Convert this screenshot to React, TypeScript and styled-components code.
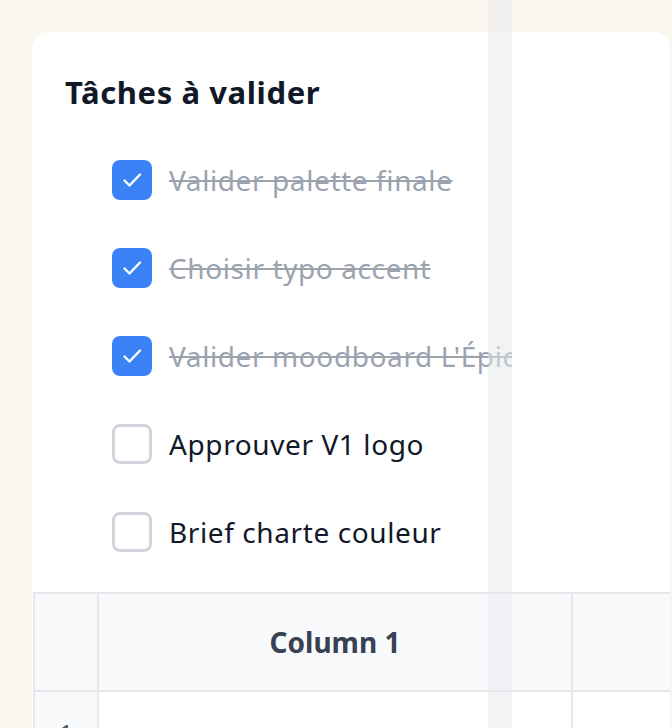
import React from "react";
import styled, { createGlobalStyle } from "styled-components";

const GlobalStyle = createGlobalStyle`
  html, body {
    margin: 0;
    padding: 0;
    background: #faf7f1;
    font-family: "Noto Sans", "Open Sans", sans-serif;
  }
`;

type Task = { label: string; done: boolean };

const tasks: Task[] = [
  { label: "Valider palette finale", done: true },
  { label: "Choisir typo accent", done: true },
  { label: "Valider moodboard L'Épicerie", done: true },
  { label: "Approuver V1 logo", done: false },
  { label: "Brief charte couleur", done: false },
];

const CheckIcon = () => (
  <svg width="40" height="40" viewBox="0 0 40 40" fill="none">
    <path
      d="M12.5 20.5l5 5L28 14.5"
      stroke="#fff"
      strokeWidth="2.4"
      strokeLinecap="round"
      strokeLinejoin="round"
    />
  </svg>
);

export default function App() {
  return (
    <>
      <GlobalStyle />
      <Styled.Page>
        <Styled.Card>
          <Styled.Title>Tâches à valider</Styled.Title>
          <Styled.List>
            {tasks.map((t) => (
              <Styled.Row key={t.label}>
                <Styled.Box $checked={t.done}>{t.done && <CheckIcon />}</Styled.Box>
                <Styled.Label $done={t.done}>{t.label}</Styled.Label>
              </Styled.Row>
            ))}
          </Styled.List>
          <Styled.Table>
            <colgroup>
              <col style={{ width: 64 }} />
              <col style={{ width: 474 }} />
              <col style={{ width: 474 }} />
            </colgroup>
            <thead>
              <tr>
                <Styled.Corner />
                <Styled.Head>Column 1</Styled.Head>
                <Styled.Head />
              </tr>
            </thead>
            <tbody>
              <tr>
                <Styled.RowNum>1</Styled.RowNum>
                <Styled.Cell />
                <Styled.Cell />
              </tr>
            </tbody>
          </Styled.Table>
        </Styled.Card>
        <Styled.Gutter />
      </Styled.Page>
    </>
  );
}

const Styled = {
  Page: styled.div`
    padding: 32px 2px 0 32px;
    height: 728px;
    box-sizing: border-box;
    overflow: hidden;
  `,
  Card: styled.section`
    background: #fff;
    border-radius: 16px 16px 0 0;
    box-shadow: 0 1px 3px rgba(17, 24, 39, 0.04);
    padding: 41px 0 0 0;
    overflow: hidden;
    height: 720px;
  `,
  Title: styled.h2`
    margin: 0 0 0 33px;
    font-size: 31px;
    line-height: 38px;
    font-weight: 700;
    color: #111827;
    letter-spacing: 0.6px;
  `,
  List: styled.ul`
    list-style: none;
    margin: 25px 0 16px 0;
    padding: 0 0 0 80px;
  `,
  Row: styled.li`
    display: flex;
    align-items: center;
    gap: 17px;
    height: 88px;
  `,
  Box: styled.span<{ $checked: boolean }>`
    flex: none;
    width: 40px;
    height: 40px;
    box-sizing: border-box;
    border-radius: 8px;
    display: flex;
    align-items: center;
    justify-content: center;
    background: ${(p) => (p.$checked ? "#3b82f6" : "#fff")};
    border: ${(p) => (p.$checked ? "none" : "3px solid #d1d5db")};
  `,
  Label: styled.span<{ $done: boolean }>`
    max-width: 343px;
    overflow: hidden;
    white-space: nowrap;
    font-size: 28px;
    line-height: 40px;
    letter-spacing: 0.6px;
    color: ${(p) => (p.$done ? "#9ca3af" : "#111827")};
    text-decoration: ${(p) => (p.$done ? "line-through" : "none")};
    text-decoration-thickness: 2px;
  `,
  Table: styled.table`
    width: 1012px;
    border-collapse: collapse;
    table-layout: fixed;
    margin-left: 1px;
    border-top: 2px solid #e5e7eb;
    border-left: 2px solid #e5e7eb;
  `,
  Corner: styled.th`
    height: 96px;
    padding: 0;
    background: #f8fafc;
    border-right: 2px solid #e5e7eb;
    border-bottom: 2px solid #e5e7eb;
  `,
  Head: styled.th`
    height: 96px;
    padding: 0;
    background: #f8fafc;
    border-right: 2px solid #e5e7eb;
    border-bottom: 2px solid #e5e7eb;
    font-size: 28px;
    font-weight: 700;
    color: #374151;
    text-align: center;
  `,
  RowNum: styled.td`
    background: #f9fafb;
    border-right: 2px solid #e5e7eb;
    text-align: center;
    vertical-align: top;
    padding: 24px 0 0 0;
    height: 96px;
    font-size: 24px;
    color: #4b5563;
  `,
  Cell: styled.td`
    border-right: 2px solid #e5e7eb;
    height: 96px;
  `,
  Gutter: styled.div`
    position: fixed;
    top: 0;
    bottom: 0;
    left: 488px;
    width: 24px;
    background: rgba(229, 231, 235, 0.5);
    pointer-events: none;
  `,
};
